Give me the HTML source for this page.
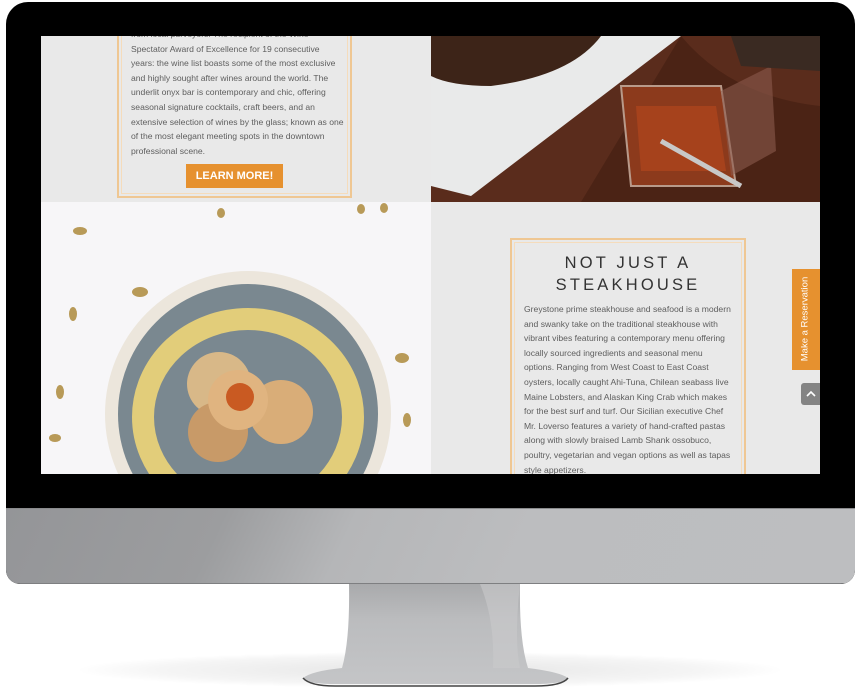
<!DOCTYPE html>
<html><head><meta charset="utf-8"><style>
*{margin:0;padding:0;box-sizing:border-box}
body{width:861px;height:697px;background:#fff;position:relative;overflow:hidden;font-family:"Liberation Sans",sans-serif}
.abs{position:absolute}
.txt{font-family:"Liberation Sans",sans-serif;font-size:8.6px;line-height:14.6px;color:#5e5e5e;white-space:nowrap}
</style></head><body>
<div class="abs" style="left:80px;top:652px;width:700px;height:36px;border-radius:50%;background:radial-gradient(ellipse at center,rgba(0,0,0,0.10) 0%,rgba(0,0,0,0.04) 55%,rgba(0,0,0,0) 72%)"></div>
<svg class="abs" style="left:0;top:0" width="861" height="697">
<defs><linearGradient id="st" x1="0" y1="0" x2="0" y2="1"><stop offset="0" stop-color="#a9aaac"/><stop offset="0.35" stop-color="#bbbcbe"/><stop offset="1" stop-color="#c4c5c7"/></linearGradient></defs>
<path d="M349 584 L520 584 Q519 640 528 668 Q560 672 568 678 Q566 683 540 684 L330 684 Q304 683 303 678 Q312 671 342 668 Q350 640 349 584Z" fill="url(#st)"/>
<path d="M480 584 Q495 620 493 668 L520 668 Q514 640 520 584Z" fill="#c9cacc" opacity="0.6"/>
<path d="M303 678 Q310 686 335 686 L535 686 Q562 686 568 678" stroke="#444" stroke-width="1.5" fill="none"/>
</svg>
<div class="abs" style="left:6px;top:2px;width:849px;height:582px;border-radius:22px 22px 14px 14px;background:#000;overflow:hidden">
 <div class="abs" style="left:0;top:506px;width:849px;height:76px;background:linear-gradient(115deg,#949598 0%,#9c9d9f 25%,#b5b6b8 40%,#bcbdbf 60%,#bdbec0 100%);border-top:1px solid #8a8b8d;border-bottom:1px solid #7e7f81"></div>
</div>
<div class="abs" style="left:41px;top:36px;width:779px;height:438px;background:#e9e9e9;overflow:hidden">
 <div class="abs" style="left:76px;top:-20px;width:235px;height:182px;border:2px solid #efc793;outline:1px solid #f5dcbc;outline-offset:-5px"></div>
 <div class="abs txt" style="left:90px;top:-9px">from local purveyors. The recipient of the Wine<br>Spectator Award of Excellence for 19 consecutive<br>years: the wine list boasts some of the most exclusive<br>and highly sought after wines around the world. The<br>underlit onyx bar is contemporary and chic, offering<br>seasonal signature cocktails, craft beers, and an<br>extensive selection of wines by the glass; known as one<br>of the most elegant meeting spots in the downtown<br>professional scene.</div>
 <div class="abs" style="left:145px;top:128px;width:97px;height:24px;background:#e6912f;color:#fff;font-family:'Liberation Sans',sans-serif;font-weight:bold;font-size:11px;line-height:24px;text-align:center">LEARN MORE!</div>
 <svg class="abs" style="left:390px;top:0" width="389" height="166">
  <rect width="389" height="166" fill="#5a2c1c"/>
  <path d="M250 0 Q300 60 389 70 L389 166 L150 166Z" fill="#4b2315"/>
  <path d="M0 20 L0 150 L40 160 L250 0 L60 0Z" fill="#e9eaea"/>
  <path d="M0 0 L170 0 Q140 40 60 50 Q20 50 0 40Z" fill="#3d2418"/>
  <path d="M190 50 L290 50 L305 150 L200 150Z" fill="#8c3a1c" stroke="#b89a8a" stroke-width="2"/>
  <path d="M205 70 L285 70 L295 135 L210 135Z" fill="#a6421c"/>
  <path d="M290 55 L340 30 L345 115 L300 140Z" fill="#8a5a4c" opacity="0.6"/>
  <path d="M230 105 L310 150" stroke="#c8c8c8" stroke-width="5"/>
  <path d="M300 0 L389 0 L389 35 L310 30Z" fill="#3a2a22"/>
 </svg>
 <svg class="abs" style="left:0;top:166px" width="390" height="272">
  <rect width="390" height="272" fill="#f7f6f8"/>
  <circle cx="207" cy="212" r="143" fill="#ece6dc"/>
  <circle cx="207" cy="212" r="130" fill="#7a8890"/>
  <ellipse cx="207" cy="215" rx="105" ry="98" fill="none" stroke="#e2cd7a" stroke-width="22"/>
  <circle cx="178" cy="182" r="32" fill="#d8b888"/>
  <circle cx="240" cy="210" r="32" fill="#d9ad78"/>
  <circle cx="177" cy="230" r="30" fill="#c89a68"/>
  <circle cx="197" cy="198" r="30" fill="#e0b480"/>
  <circle cx="199" cy="195" r="14" fill="#c95a22"/>
  <g fill="#b89a58"><ellipse cx="39" cy="29" rx="7" ry="4"/><ellipse cx="99" cy="90" rx="8" ry="5"/><ellipse cx="32" cy="112" rx="4" ry="7"/><ellipse cx="19" cy="190" rx="4" ry="7"/><ellipse cx="14" cy="236" rx="6" ry="4"/><ellipse cx="180" cy="11" rx="4" ry="5"/><ellipse cx="320" cy="7" rx="4" ry="5"/><ellipse cx="343" cy="6" rx="4" ry="5"/><ellipse cx="361" cy="156" rx="7" ry="5"/><ellipse cx="366" cy="218" rx="4" ry="7"/></g>
 </svg>
 <div class="abs" style="left:469px;top:202px;width:236px;height:260px;border:2px solid #efc793;outline:1px solid #f5dcbc;outline-offset:-5px"></div>
 <div class="abs" style="left:469px;top:216px;width:236px;text-align:center;font-size:16.5px;line-height:22px;letter-spacing:3.2px;color:#333">NOT JUST A<br>STEAKHOUSE</div>
 <div class="abs txt" style="left:483px;top:266px">Greystone prime steakhouse and seafood is a modern<br>and swanky take on the traditional steakhouse with<br>vibrant vibes featuring a contemporary menu offering<br>locally sourced ingredients and seasonal menu<br>options. Ranging from West Coast to East Coast<br>oysters, locally caught Ahi-Tuna, Chilean seabass live<br>Maine Lobsters, and Alaskan King Crab which makes<br>for the best surf and turf. Our Sicilian executive Chef<br>Mr. Loverso features a variety of hand-crafted pastas<br>along with slowly braised Lamb Shank ossobuco,<br>poultry, vegetarian and vegan options as well as tapas<br>style appetizers.</div>
 <div class="abs" style="left:751px;top:233px;width:28px;height:101px;background:#e6912f"></div>
 <div class="abs" style="left:714px;top:273px;width:101px;height:20px;transform:rotate(-90deg);color:#fff;font-size:9.5px;line-height:20px;text-align:center">Make a Reservation</div>
 <div class="abs" style="left:760px;top:347px;width:19px;height:22px;background:#848484;border-radius:3px 0 0 3px"></div>
 <svg class="abs" style="left:765px;top:354px" width="10" height="8"><path d="M1 6 L5 2 L9 6" stroke="#fff" stroke-width="1.6" fill="none"/></svg>
</div>
</body></html>
